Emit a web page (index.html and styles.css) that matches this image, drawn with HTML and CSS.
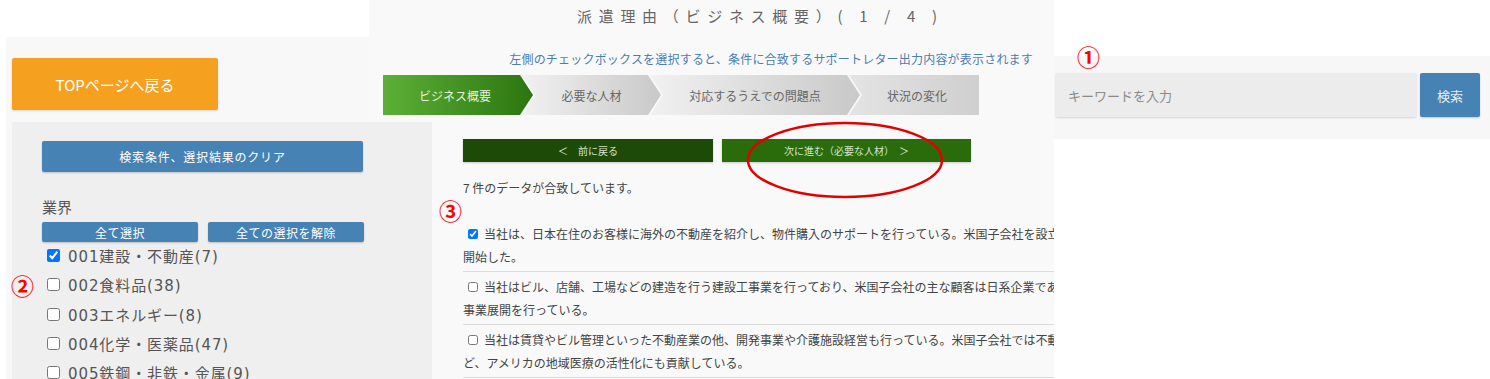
FILE: index.html
```
<!DOCTYPE html>
<html lang="ja">
<head>
    <meta charset="UTF-8">
    <meta name="viewport" content="width=device-width, initial-scale=1.0">
    <title>サポートレター検索</title>
    <link rel="stylesheet" href="styles.css">
</head>
<body>
    <div class="board">
        <!-- 左上：トップへ戻る -->
        <div class="top-back">
            <button class="btn-top">TOPページへ戻る</button>
        </div>

        <!-- 中央上：タイトルとステップ -->
        <div class="step-head">
            <div class="page-title">派遣理由（ビジネス概要）( 1 / 4 )</div>
            <div class="hint">左側のチェックボックスを選択すると、条件に合致するサポートレター出力内容が表示されます</div>
            <div class="steps">
                <div class="step step-active">ビジネス概要</div>
                <div class="step">必要な人材</div>
                <div class="step step-wide">対応するうえでの問題点</div>
                <div class="step step-last">状況の変化</div>
            </div>
        </div>

        <!-- 左：絞り込み -->
        <div class="side">
            <div class="filter">
                <button class="btn-blue btn-clear">検索条件、選択結果のクリア</button>
                <div class="filter-title">業界</div>
                <div class="select-row">
                    <button class="btn-blue btn-small">全て選択</button>
                    <button class="btn-blue btn-small">全ての選択を解除</button>
                </div>
                <ul class="industry-list">
                    <li><input type="checkbox" checked> 001建設・不動産(7)</li>
                    <li><input type="checkbox"> 002食料品(38)</li>
                    <li><input type="checkbox"> 003エネルギー(8)</li>
                    <li><input type="checkbox"> 004化学・医薬品(47)</li>
                    <li><input type="checkbox"> 005鉄鋼・非鉄・金属(9)</li>
                </ul>
                <span class="mark mark-2">②</span>
            </div>
        </div>

        <!-- 中央：結果 -->
        <div class="results">
            <div class="nav-row">
                <button class="btn-prev">＜　前に戻る</button>
                <button class="btn-next">次に進む（必要な人材）　＞</button>
            </div>
            <div class="count">7 件のデータが合致しています。</div>
            <div class="result-list">
                <div class="result">
                    <div class="line"><input type="checkbox" checked>当社は、日本在住のお客様に海外の不動産を紹介し、物件購入のサポートを行っている。米国子会社を設立し、現地での営業を</div>
                    <div class="line">開始した。</div>
                </div>
                <div class="result">
                    <div class="line"><input type="checkbox">当社はビル、店舗、工場などの建造を行う建設工事業を行っており、米国子会社の主な顧客は日系企業であり、現地での</div>
                    <div class="line">事業展開を行っている。</div>
                </div>
                <div class="result">
                    <div class="line"><input type="checkbox">当社は賃貸やビル管理といった不動産業の他、開発事業や介護施設経営も行っている。米国子会社では不動産開発な</div>
                    <div class="line">ど、アメリカの地域医療の活性化にも貢献している。</div>
                </div>
            </div>
            <span class="mark mark-3">③</span>
        </div>

        <!-- 右：キーワード検索 -->
        <div class="search">
            <input type="text" class="search-input" placeholder="キーワードを入力">
            <button class="btn-blue btn-search">検索</button>
            <span class="mark mark-1">①</span>
        </div>

        <svg class="circle-note" width="210" height="84" viewBox="0 0 210 84">
            <ellipse cx="105" cy="42" rx="97" ry="37" fill="none" stroke="#e50000" stroke-width="2.5"/>
        </svg>
    </div>
</body>
</html>
```

FILE: styles.css
```
body {
    margin: 0;
    background: #fff;
    font-family: "Noto Sans CJK JP", sans-serif;
    color: #444;
    overflow: hidden;
}

button {
    font-family: "Noto Sans CJK JP", sans-serif;
    border: none;
    cursor: pointer;
}

.board {
    position: relative;
    width: 1490px;
    height: 379px;
    padding-left: 6px;
    box-sizing: border-box;
    display: grid;
    grid-template-columns: 363px 63px 622px 1fr;
    grid-template-rows: 122px 257px;
    overflow: hidden;
}

/* 左上 */
.top-back {
    grid-column: 1;
    grid-row: 1;
    margin-top: 37px;
    background: #f8f8f8;
    padding: 21px 0 0 6px;
}

.btn-top {
    width: 206px;
    height: 52px;
    background: #f5a11f;
    color: #fff;
    font-size: 15px;
    border-radius: 2px;
    box-shadow: 0 1px 2px rgba(0, 0, 0, 0.15);
}

/* 中央上 */
.step-head {
    grid-column: 2 / 4;
    grid-row: 1;
    background: #f9f9f9;
    padding: 6px 21px 0 14px;
}

.page-title {
    margin-left: 194px;
    font-size: 15px;
    line-height: 20px;
    letter-spacing: 6.7px;
    color: #666;
}

.hint {
    margin-top: 25px;
    text-align: right;
    font-size: 12px;
    line-height: 16px;
    letter-spacing: 0.2px;
    color: #4a7db2;
}

.steps {
    display: flex;
    margin-top: 8px;
    height: 40px;
}

.step {
    width: 139px;
    margin-left: -11px;
    display: flex;
    align-items: center;
    justify-content: center;
    font-size: 12px;
    color: #666;
    background: linear-gradient(to right, #f1f1f1, #c9c9c9);
    clip-path: polygon(0 0, calc(100% - 13px) 0, 100% 50%, calc(100% - 13px) 100%, 0 100%, 13px 50%);
}

.step-active {
    width: 150px;
    margin-left: 0;
    padding-right: 6px;
    box-sizing: border-box;
    color: #e6f3de;
    background: linear-gradient(to right, #5cb036, #2c7511);
    clip-path: polygon(0 0, calc(100% - 13px) 0, 100% 50%, calc(100% - 13px) 100%, 0 100%);
}

.step-wide {
    width: 210px;
}

.step-last {
    width: 130px;
    padding-left: 6px;
    box-sizing: border-box;
    background: linear-gradient(to right, #e4e4e4, #cfcfcf);
    clip-path: polygon(0 0, 100% 0, 100% 100%, 0 100%, 13px 50%);
}

/* 左：絞り込み */
.side {
    grid-column: 1 / 3;
    grid-row: 2;
    background: #f8f8f8;
    padding-left: 6px;
}

.filter {
    position: relative;
    height: 100%;
    background: #efefef;
    padding: 19px 0 0 30px;
    box-sizing: border-box;
}

.btn-blue {
    background: #4682b4;
    color: #fff;
    border-radius: 2px;
    box-shadow: 0 1px 2px rgba(0, 0, 0, 0.2);
}

.btn-clear {
    width: 321px;
    height: 31px;
    font-size: 12px;
    letter-spacing: 0.8px;
}

.filter-title {
    margin-top: 25px;
    font-size: 15px;
    line-height: 20px;
    color: #555;
}

.select-row {
    display: flex;
    gap: 10px;
    margin-top: 5px;
}

.btn-small {
    width: 156px;
    height: 20px;
    padding: 0;
    font-size: 12px;
    letter-spacing: 0.5px;
}

.industry-list {
    list-style: none;
    margin: -1px 0 0;
    padding: 0;
}

.industry-list li {
    height: 29.3px;
    display: flex;
    align-items: center;
    font-family: "DejaVu Sans", "Noto Sans CJK JP", sans-serif;
    font-size: 15px;
    letter-spacing: 0.9px;
    color: #555;
}

.industry-list input {
    width: 13px;
    height: 13px;
    margin: 0 8px 0 5px;
}

.mark {
    position: absolute;
    font-size: 23px;
    font-weight: bold;
    line-height: 24px;
    color: #ff0000;
}

.mark-2 {
    left: -1px;
    top: 151px;
}

/* 中央：結果 */
.results {
    position: relative;
    grid-column: 3;
    grid-row: 2;
    background: #f9f9f9;
    padding: 17px 0 0 31px;
    overflow: hidden;
}

.nav-row {
    display: flex;
    gap: 9px;
}

.btn-prev,
.btn-next {
    height: 23px;
    font-size: 10px;
    color: #d4e4cb;
    box-shadow: 0 1px 2px rgba(0, 0, 0, 0.2);
}

.btn-prev {
    width: 250px;
    background: #1e4a07;
}

.btn-next {
    width: 249px;
    background: #2a6c0b;
}

.count {
    margin-top: 17px;
    font-size: 12px;
    line-height: 18px;
    color: #444;
}

.result-list {
    margin-top: 22px;
}

.result {
    padding: 3px 0;
    border-bottom: 1px solid #dcdcdc;
}

.line {
    white-space: nowrap;
    font-size: 12px;
    line-height: 23px;
    color: #444;
    display: flex;
    align-items: center;
}

.line input {
    width: 10px;
    height: 10px;
    margin: 0 6px 0 5px;
}

.mark-3 {
    left: 7px;
    top: 76px;
}

/* 右：検索 */
.search {
    position: relative;
    grid-column: 4;
    grid-row: 1 / 3;
    align-self: start;
    margin-top: 56px;
    height: 83px;
    background: #f7f7f7;
    display: flex;
    gap: 4px;
    padding: 17px 0 0 2px;
    box-sizing: border-box;
}

.search-input {
    width: 360px;
    height: 44px;
    box-sizing: border-box;
    border: none;
    background: #ececec;
    box-shadow: 0 1px 2px rgba(0, 0, 0, 0.15);
    padding-left: 12px;
    font-family: "Noto Sans CJK JP", sans-serif;
    font-size: 13px;
}

.search-input::placeholder {
    color: #8a8a8a;
}

.btn-search {
    width: 60px;
    height: 44px;
    font-size: 13px;
    color: #e6edf5;
}

.mark-1 {
    left: 23px;
    top: -12px;
}

.circle-note {
    position: absolute;
    left: 740px;
    top: 118px;
}
```
